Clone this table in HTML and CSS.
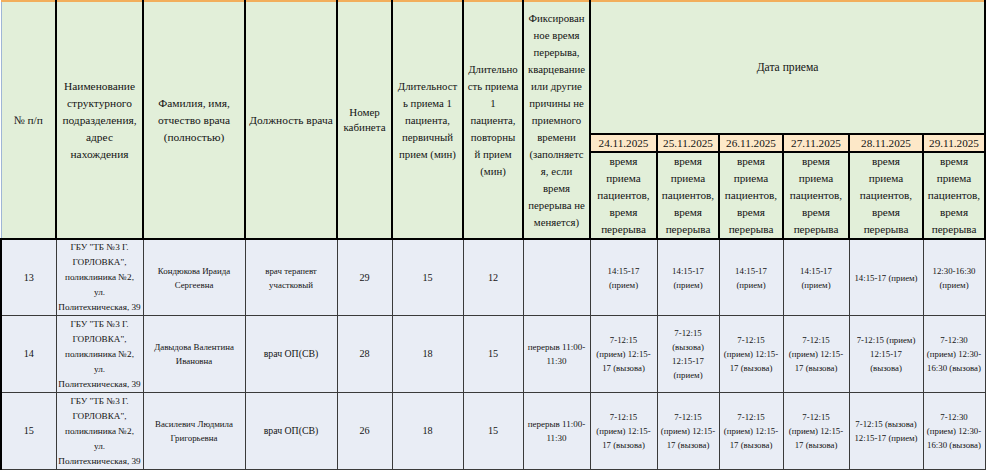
FILE: index.html
```html
<!DOCTYPE html>
<html lang="ru">
<head>
<meta charset="utf-8">
<title>График приема врачей</title>
<link rel="stylesheet" href="styles.css">
</head>
<body>
<div class="sheet">
<table class="schedule">
<colgroup>
<col class="c1"><col class="c2"><col class="c3"><col class="c4"><col class="c5"><col class="c6"><col class="c7"><col class="c8"><col class="c9"><col class="c10"><col class="c11"><col class="c12"><col class="c13"><col class="c14">
</colgroup>
<thead>
<tr class="hr1">
<th rowspan="3" class="first">№ п/п</th>
<th rowspan="3">Наименование<br>структурного<br>подразделения,<br>адрес<br>нахождения</th>
<th rowspan="3">Фамилия, имя,<br>отчество врача<br>(полностью)</th>
<th rowspan="3">Должность врача</th>
<th rowspan="3" class="small">Номер<br>кабинета</th>
<th rowspan="3" class="tight">Длительност<br>ь приема 1<br>пациента,<br>первичный<br>прием (мин)</th>
<th rowspan="3" class="tight">Длительно<br>сть приема<br>1<br>пациента,<br>повторны<br>й прием<br>(мин)</th>
<th rowspan="3" class="tight">Фиксирован<br>ное время<br>перерыва,<br>кварцевание<br>или другие<br>причины не<br>приемного<br>времени<br>(заполняетс<br>я, если<br>время<br>перерыва не<br>меняется)</th>
<th colspan="6" class="span">Дата приема</th>
</tr>
<tr class="hr2">
<th class="date">24.11.2025</th>
<th class="date">25.11.2025</th>
<th class="date">26.11.2025</th>
<th class="date">27.11.2025</th>
<th class="date">28.11.2025</th>
<th class="date">29.11.2025</th>
</tr>
<tr class="hr3">
<th class="sub">время<br>приема<br>пациентов,<br>время<br>перерыва</th>
<th class="sub">время<br>приема<br>пациентов,<br>время<br>перерыва</th>
<th class="sub">время<br>приема<br>пациентов,<br>время<br>перерыва</th>
<th class="sub">время<br>приема<br>пациентов,<br>время<br>перерыва</th>
<th class="sub">время<br>приема<br>пациентов,<br>время<br>перерыва</th>
<th class="sub">время<br>приема<br>пациентов,<br>время<br>перерыва</th>
</tr>
</thead>
<tbody>
<tr class="r1">
<td class="num">13</td>
<td class="org">ГБУ "ТБ №3 Г.<br>ГОРЛОВКА",<br>поликлиника №2,<br>ул.<br>Политехническая, 39</td>
<td class="name">Кондюкова Ираида<br>Сергеевна</td>
<td class="name">врач терапевт<br>участковый</td>
<td class="num">29</td>
<td class="num">15</td>
<td class="num">12</td>
<td class="t"></td>
<td class="t">14:15-17<br>(прием)</td>
<td class="t">14:15-17<br>(прием)</td>
<td class="t">14:15-17<br>(прием)</td>
<td class="t">14:15-17<br>(прием)</td>
<td class="t">14:15-17 (прием)</td>
<td class="t">12:30-16:30<br>(прием)</td>
</tr>
<tr class="r2">
<td class="num">14</td>
<td class="org">ГБУ "ТБ №3 Г.<br>ГОРЛОВКА",<br>поликлиника №2,<br>ул.<br>Политехническая, 39</td>
<td class="name">Давыдова Валентина<br>Ивановна</td>
<td class="pos">врач ОП(СВ)</td>
<td class="num">28</td>
<td class="num">18</td>
<td class="num">15</td>
<td class="t br">перерыв 11:00-<br>11:30</td>
<td class="t">7-12:15<br>(прием) 12:15-<br>17 (вызова)</td>
<td class="t">7-12:15<br>(вызова)<br>12:15-17<br>(прием)</td>
<td class="t">7-12:15<br>(прием) 12:15-<br>17 (вызова)</td>
<td class="t">7-12:15<br>(прием) 12:15-<br>17 (вызова)</td>
<td class="t">7-12:15 (прием)<br>12:15-17<br>(вызова)</td>
<td class="t">7-12:30<br>(прием) 12:30-<br>16:30 (вызова)</td>
</tr>
<tr class="r3">
<td class="num">15</td>
<td class="org">ГБУ "ТБ №3 Г.<br>ГОРЛОВКА",<br>поликлиника №2,<br>ул.<br>Политехническая, 39</td>
<td class="name">Василевич Людмила<br>Григорьевна</td>
<td class="pos">врач ОП(СВ)</td>
<td class="num">26</td>
<td class="num">18</td>
<td class="num">15</td>
<td class="t br">перерыв 11:00-<br>11:30</td>
<td class="t">7-12:15<br>(прием) 12:15-<br>17 (вызова)</td>
<td class="t">7-12:15<br>(прием) 12:15-<br>17 (вызова)</td>
<td class="t">7-12:15<br>(прием) 12:15-<br>17 (вызова)</td>
<td class="t">7-12:15<br>(прием) 12:15-<br>17 (вызова)</td>
<td class="t">7-12:15 (вызова)<br>12:15-17 (прием)</td>
<td class="t">7-12:30<br>(прием) 12:30-<br>16:30 (вызова)</td>
</tr>
</tbody>
</table>
</div>
</body>
</html>
```

FILE: styles.css
```css
html, body {
  margin: 0;
  padding: 0;
  background: #ffffff;
}

body {
  width: 987px;
  height: 470px;
  overflow: hidden;
  font-family: "Liberation Serif", "Times New Roman", serif;
  color: #141414;
}

.schedule {
  border-collapse: collapse;
  table-layout: fixed;
  width: 984px;
}

.c1 { width: 55px; }
.c2 { width: 87px; }
.c3 { width: 102px; }
.c4 { width: 92px; }
.c5 { width: 55px; }
.c6 { width: 71px; }
.c7 { width: 60px; }
.c8 { width: 67px; }
.c9 { width: 67px; }
.c10 { width: 62px; }
.c11 { width: 64px; }
.c12 { width: 66px; }
.c13 { width: 74px; }
.c14 { width: 62px; }

.schedule th {
  background: #e2efd9;
  font-weight: normal;
  font-size: 11.4px;
  line-height: 17px;
  text-align: center;
  vertical-align: middle;
  padding: 0;
  white-space: nowrap;
  border-left: 2px solid #000;
  border-right: 2px solid #000;
  border-bottom: 2px solid #000;
}

.hr1 th {
  border-top: 2px solid #f2ae5c;
  height: 131px;
}

.hr1 th.first {
  border-left: 1px solid #9fb6d6;
}

.hr1 th.small {
  font-size: 11px;
  line-height: 15px;
}

.hr1 th.tight {
  font-size: 10.8px;
}

.hr1 th.span {
  font-size: 11.6px;
}

.hr2 th.date {
  background: #fde8c8;
  height: 16px;
  line-height: 16px;
  font-size: 11.2px;
  border-top: 2px solid #000;
}

.hr3 th.sub {
  height: 85px;
  font-size: 11.2px;
}

.schedule td {
  background: #e9edf5;
  border: 1px solid #3a3a3a;
  text-align: center;
  vertical-align: middle;
  padding: 0;
  font-size: 9px;
  line-height: 14px;
  white-space: nowrap;
}

.schedule td.org {
  line-height: 15px;
  font-size: 9.2px;
}

.schedule td.name {
  font-size: 8.9px;
}

.schedule td.pos {
  font-size: 9.8px;
}

.schedule td.num {
  font-size: 10.2px;
}

.schedule td.t {
  font-size: 8.8px;
}

.schedule td.br {
  font-size: 9px;
}

.r1 td { height: 75px; }
.r2 td { height: 76px; }
.r3 td { height: 76px; }

.r1 td:first-child,
.r2 td:first-child,
.r3 td:first-child {
  border-left: 2px solid #000;
}
```
